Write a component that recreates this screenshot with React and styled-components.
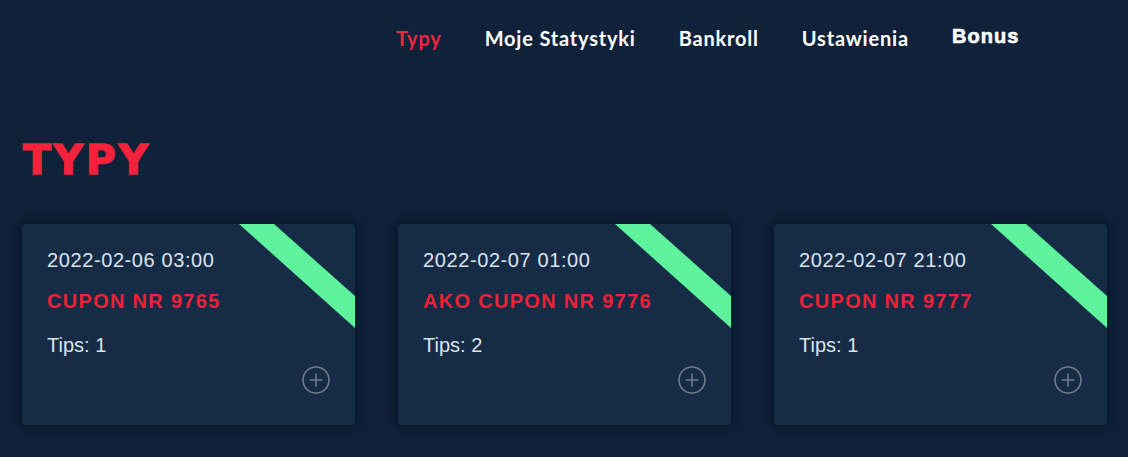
import React from "react";
import styled, { createGlobalStyle } from "styled-components";

const Global = createGlobalStyle`
  html, body { margin: 0; padding: 0; background: #10223a; }
  body { font-family: "Liberation Sans", Arial, sans-serif; }
  * { box-sizing: border-box; }
`;

const Page = styled.div`
  width: 1128px;
  height: 457px;
  overflow: hidden;
  background: #10223a;
  padding: 0 22px;
`;

const Nav = styled.nav`
  height: 76px;
  display: flex;
  align-items: center;
  padding-left: 374px;
  gap: 43px;
`;

const NavItem = styled.a`
  font-family: ${(p) => (p.$heavy ? '"Liberation Sans", Arial, sans-serif' : '"Lato", sans-serif')};
  font-weight: 700;
  font-size: 20px;
  letter-spacing: ${(p) => (p.$heavy ? "1.1px" : "0.8px")};
  color: ${(p) => (p.$active ? "#ef2640" : "#ffffff")};
  text-decoration: none;
  margin-top: ${(p) => (p.$heavy ? "-3px" : "0")};
  -webkit-text-stroke: ${(p) => (p.$heavy ? "0.6px #ffffff" : "0")};
`;

const Title = styled.h1`
  margin: 62px 0 0;
  padding-left: 1px;
  font-family: "DejaVu Sans", "Liberation Sans", sans-serif;
  font-weight: 700;
  font-size: 41px;
  line-height: 44px;
  letter-spacing: 2.6px;
  color: #f2233b;
  -webkit-text-stroke: 1.3px #f2233b;
`;

const Grid = styled.div`
  margin-top: 42px;
  display: grid;
  grid-template-columns: repeat(3, 333px);
  column-gap: 43px;
`;

const Card = styled.div`
  position: relative;
  height: 201px;
  background: #162b45;
  border-radius: 4px;
  overflow: hidden;
  padding: 24px 25px;
  box-shadow: 0 0 14px 4px rgba(5, 15, 28, 0.55);
`;

const Stripe = styled.svg`
  position: absolute;
  top: 0;
  right: 0;
`;

const DateText = styled.div`
  font-size: 20px;
  line-height: 24px;
  letter-spacing: 0.6px;
  color: #dde4ec;
`;

const CouponName = styled.div`
  margin-top: 17px;
  font-size: 20px;
  line-height: 24px;
  font-weight: 700;
  letter-spacing: 1.3px;
  color: #ec2239;
`;

const Tips = styled.div`
  margin-top: 20px;
  font-size: 20px;
  line-height: 24px;
  color: #dde4ec;
`;

const AddButton = styled.button`
  position: absolute;
  right: 24px;
  bottom: 30px;
  width: 30px;
  height: 30px;
  padding: 0;
  border: none;
  background: transparent;
  cursor: pointer;
  display: flex;
`;

const coupons = [
  { date: "2022-02-06 03:00", name: "CUPON NR 9765", tips: 1 },
  { date: "2022-02-07 01:00", name: "AKO CUPON NR 9776", tips: 2 },
  { date: "2022-02-07 21:00", name: "CUPON NR 9777", tips: 1 },
];

const PlusCircle = () => (
  <svg width="30" height="30" viewBox="0 0 30 30" fill="none">
    <circle cx="15" cy="15" r="13" stroke="#6f7d8c" strokeWidth="1.6" />
    <path d="M15 8.5v13M8.5 15h13" stroke="#6f7d8c" strokeWidth="1.6" />
  </svg>
);

export default function App() {
  return (
    <>
      <Global />
      <Page>
        <Nav>
          <NavItem $active href="#">Typy</NavItem>
          <NavItem href="#">Moje Statystyki</NavItem>
          <NavItem href="#">Bankroll</NavItem>
          <NavItem href="#">Ustawienia</NavItem>
          <NavItem $heavy href="#">Bonus</NavItem>
        </Nav>
        <Title>TYPY</Title>
        <Grid>
          {coupons.map((c) => (
            <Card key={c.name}>
              <Stripe width="116" height="104" viewBox="0 0 116 104">
                <polygon points="0,0 35,0 116,72 116,104" fill="#5ef29c" />
              </Stripe>
              <DateText>{c.date}</DateText>
              <CouponName>{c.name}</CouponName>
              <Tips>Tips: {c.tips}</Tips>
              <AddButton aria-label="Add">
                <PlusCircle />
              </AddButton>
            </Card>
          ))}
        </Grid>
      </Page>
    </>
  );
}
